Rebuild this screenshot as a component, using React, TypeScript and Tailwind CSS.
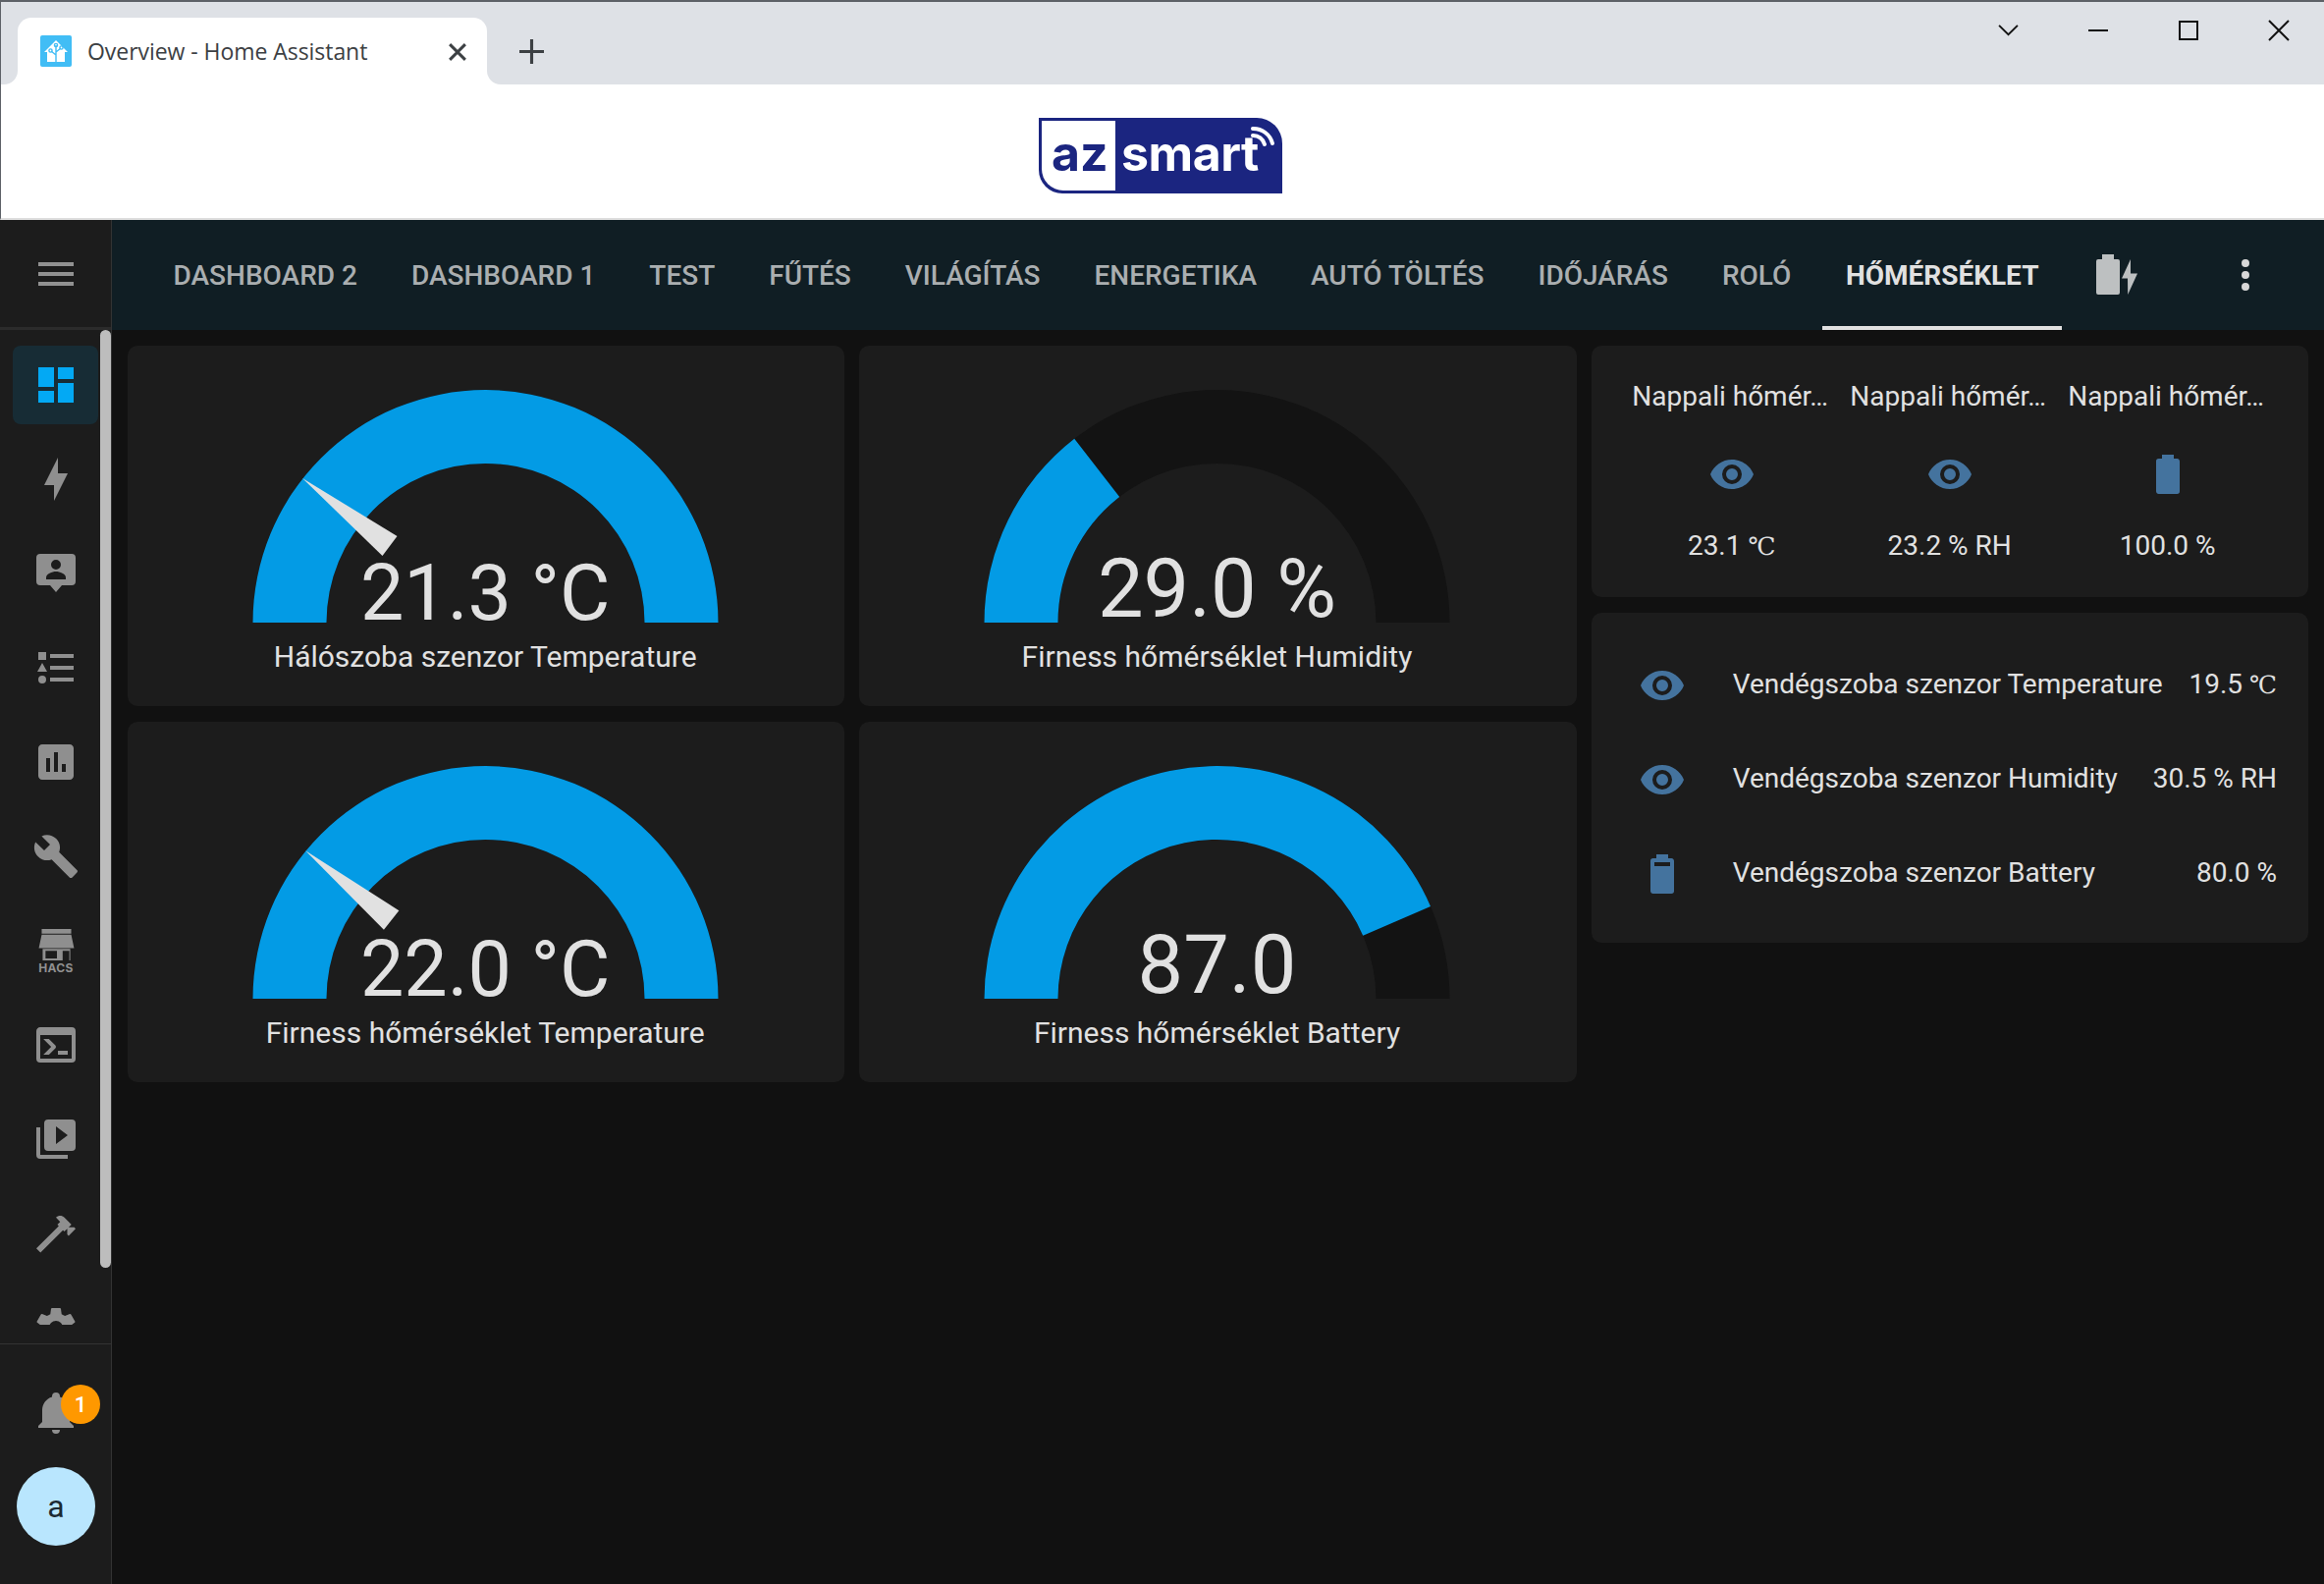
import React from 'react'

const P = {
  dashboard: 'M13,3V9H21V3M13,21H21V11H13M3,21H11V15H3M3,13H11V3H3V13Z',
  bolt: 'M11 15H6L13 1V9H18L11 23V15Z',
  person: 'M4,2H20A2,2 0 0,1 22,4V16A2,2 0 0,1 20,18H15L12,21.5L9,18H4A2,2 0 0,1 2,16V4A2,2 0 0,1 4,2ZM12,5A2.5,2.5 0 0,0 9.5,7.5A2.5,2.5 0 0,0 12,10A2.5,2.5 0 0,0 14.5,7.5A2.5,2.5 0 0,0 12,5ZM7,15H17V14C17,12.2 14,11 12,11C10,11 7,12.2 7,14V15Z',
  list: 'M5,9.5L7.5,14H2.5L5,9.5M3,4H7V8H3V4M5,20A2,2 0 0,0 7,18A2,2 0 0,0 5,16A2,2 0 0,0 3,18A2,2 0 0,0 5,20M9,5V7H21V5H9M9,19H21V17H9V19M9,13H21V11H9V13Z',
  chart: 'M19 3H5C3.9 3 3 3.9 3 5V19C3 20.1 3.9 21 5 21H19C20.1 21 21 20.1 21 19V5C21 3.9 20.1 3 19 3ZM9 17H7V10H9V17M13 17H11V7H13V17M17 17H15V13H17V17Z',
  wrench: 'M22.7,19L13.6,9.9C14.5,7.6 14,4.9 12.1,3C10.1,1 7.1,0.6 4.7,1.7L9,6L6,9L1.6,4.7C0.4,7.1 0.9,10.1 2.9,12.1C4.8,14 7.5,14.5 9.8,13.6L18.9,22.7C19.3,23.1 19.9,23.1 20.3,22.7L22.6,20.4C23.1,20 23.1,19.3 22.7,19Z',
  console: 'M20,19V7H4V19H20M20,3A2,2 0 0,1 22,5V19A2,2 0 0,1 20,21H4A2,2 0 0,1 2,19V5C2,3.89 2.9,3 4,3H20M13,17V15H18V17H13M9.58,13L5.57,9H8.4L11.7,12.3C12.09,12.69 12.09,13.33 11.7,13.72L8.42,17H5.59L9.58,13Z',
  media: 'M4,6H2V20A2,2 0 0,0 4,22H18V20H4V6ZM8,2H20A2,2 0 0,1 22,4V16A2,2 0 0,1 20,18H8A2,2 0 0,1 6,16V4A2,2 0 0,1 8,2ZM12,5.5V14.5L18,10L12,5.5Z',
  hammer: 'M2 19.63L13.43 8.2L12.72 7.5L14.14 6.07L12 3.89C13.2 2.7 15.09 2.7 16.27 3.89L19.87 7.5L18.45 8.91H21.29L22 9.62L18.45 13.21L17.74 12.5V9.62L16.27 11.04L15.56 10.33L4.13 21.76L2 19.63Z',
  cog: 'M12,15.5A3.5,3.5 0 0,1 8.5,12A3.5,3.5 0 0,1 12,8.5A3.5,3.5 0 0,1 15.5,12A3.5,3.5 0 0,1 12,15.5M19.43,12.97C19.47,12.65 19.5,12.33 19.5,12C19.5,11.67 19.47,11.34 19.43,11L21.54,9.37C21.73,9.22 21.78,8.95 21.66,8.73L19.66,5.27C19.54,5.05 19.27,4.96 19.05,5.05L16.56,6.05C16.04,5.66 15.5,5.32 14.87,5.07L14.5,2.42C14.46,2.18 14.25,2 14,2H10C9.75,2 9.54,2.18 9.5,2.42L9.13,5.07C8.5,5.32 7.96,5.66 7.44,6.05L4.95,5.05C4.73,4.96 4.46,5.05 4.34,5.27L2.34,8.73C2.21,8.95 2.27,9.22 2.46,9.37L4.57,11C4.53,11.34 4.5,11.67 4.5,12C4.5,12.33 4.53,12.65 4.57,12.97L2.46,14.63C2.27,14.78 2.21,15.05 2.34,15.27L4.34,18.73C4.46,18.95 4.73,19.03 4.95,18.95L7.44,17.94C7.96,18.34 8.5,18.68 9.13,18.93L9.5,21.58C9.54,21.82 9.75,22 10,22H14C14.25,22 14.46,21.82 14.5,21.58L14.87,18.93C15.5,18.67 16.04,18.34 16.56,17.94L19.05,18.95C19.27,19.03 19.54,18.95 19.66,18.73L21.66,15.27C21.78,15.05 21.73,14.78 21.54,14.63L19.43,12.97Z',
  bell: 'M21,19V20H3V19L5,17V11C5,7.9 7.03,5.17 10,4.29C10,4.19 10,4.1 10,4A2,2 0 0,1 12,2A2,2 0 0,1 14,4C14,4.1 14,4.19 14,4.29C16.97,5.17 19,7.9 19,11V17L21,19M14,21A2,2 0 0,1 12,23A2,2 0 0,1 10,21',
  menu: 'M3,6H21V8H3V6M3,11H21V13H3V11M3,16H21V18H3V16Z',
  dots: 'M12,16A2,2 0 0,1 14,18A2,2 0 0,1 12,20A2,2 0 0,1 10,18A2,2 0 0,1 12,16M12,10A2,2 0 0,1 14,12A2,2 0 0,1 12,14A2,2 0 0,1 10,12A2,2 0 0,1 12,10M12,4A2,2 0 0,1 14,6A2,2 0 0,1 12,8A2,2 0 0,1 10,6A2,2 0 0,1 12,4Z',
  eye: 'M12,9A3,3 0 0,0 9,12A3,3 0 0,0 12,15A3,3 0 0,0 15,12A3,3 0 0,0 12,9M12,17A5,5 0 0,1 7,12A5,5 0 0,1 12,7A5,5 0 0,1 17,12A5,5 0 0,1 12,17M12,4.5C7,4.5 2.73,7.61 1,12C2.73,16.39 7,19.5 12,19.5C17,19.5 21.27,16.39 23,12C21.27,7.61 17,4.5 12,4.5Z',
  battery: 'M16.67,4H15V2H9V4H7.33A1.33,1.33 0 0,0 6,5.33V20.67C6,21.4 6.6,22 7.33,22H16.67A1.33,1.33 0 0,0 18,20.67V5.33C18,4.6 17.4,4 16.67,4Z',
  battery80: 'M16.67,4H15V2H9V4H7.33A1.33,1.33 0 0,0 6,5.33V20.67C6,21.4 6.6,22 7.33,22H16.67A1.33,1.33 0 0,0 18,20.67V5.33C18,4.6 17.4,4 16.67,4ZM16,6V8H8V6H16Z',
}

function Mdi({ d, className }: { d: string; className: string }) {
  return (
    <svg viewBox="0 0 24 24" className={`w-[48px] h-[48px] shrink-0 ${className}`} fill="currentColor" fillRule="evenodd">
      <path d={d} />
    </svg>
  )
}

function HacsIcon() {
  return (
    <div className="flex flex-col items-center w-[48px] h-[48px] pt-[2px] text-[#8f8f8f]">
      <svg viewBox="0 0 37 33" className="w-[37px] h-[33px]" fill="currentColor" fillRule="evenodd">
        <path d="M3,0H34V5H3ZM3,6H34L37,20H0ZM4,21H33V33H4ZM7,23V31H19V23ZM25,23V33H32V23Z" />
      </svg>
      <span className="mt-[2px] text-[12px] leading-[12px] font-bold tracking-[0.3px] [font-family:Inter,sans-serif]">HACS</span>
    </div>
  )
}

const tabs = ['DASHBOARD 2', 'DASHBOARD 1', 'TEST', 'FŰTÉS', 'VILÁGÍTÁS', 'ENERGETIKA', 'AUTÓ TÖLTÉS', 'IDŐJÁRÁS', 'ROLÓ']

const CX = 237.5
const CY = 237
const RO = 237
const RI = 162

function arc(from: number, to: number) {
  const pt = (r: number, a: number) => {
    const t = (a * Math.PI) / 180
    return `${(CX - r * Math.cos(t)).toFixed(2)} ${(CY - r * Math.sin(t)).toFixed(2)}`
  }
  const large = to - from > 180 ? 1 : 0
  return `M${pt(RO, from)} A${RO} ${RO} 0 ${large} 1 ${pt(RO, to)} L${pt(RI, to)} A${RI} ${RI} 0 ${large} 0 ${pt(RI, from)} Z`
}

function Gauge({ value, label, pct, needle }: { value: string; label: string; pct: number; needle?: number }) {
  return (
    <div className="bg-[#1c1c1c] rounded-[10px] h-[367px] pt-[45px] pr-[2px] flex flex-col items-center text-[#e1e1e1]">
      <div className="relative w-[475px] h-[237px]">
        <svg viewBox="0 0 475 237" className="w-[475px] h-[237px] block">
          <path d={arc(0, 180)} fill="#131313" />
          <path d={arc(0, pct * 180)} fill="#039be5" />
          {needle !== undefined && (
            <polygon points="51,90 147.5,149 132.5,169" fill="#e1e1e1" transform={`rotate(${needle} ${CX} ${CY})`} />
          )}
        </svg>
        <div className={`absolute left-0 right-0 text-center ${needle !== undefined ? 'bottom-[-10px] text-[79px] leading-[79px]' : 'bottom-[-7px] text-[83px] leading-[83px]'}`}>{value}</div>
      </div>
      <div className="mt-[17px] text-[30px] leading-[36px]">{label}</div>
    </div>
  )
}

function Celsius() {
  return <span className="[font-family:'DejaVu_Serif',serif] text-[25px]">℃</span>
}

function GlanceCol({ icon, value, celsius }: { icon: string; value: string; celsius?: boolean }) {
  return (
    <div className="flex flex-col items-center w-[222px]">
      <div className="pr-[3px] whitespace-nowrap text-center text-[28px] leading-[36px]">Nappali hőmér…</div>
      <Mdi d={icon} className="text-[#44739e] mt-[37px]" />
      <div className="mt-[31px] text-[28px] leading-[36px]">{value}{celsius && <Celsius />}</div>
    </div>
  )
}

function EntityRow({ icon, name, value, celsius }: { icon: string; name: string; value: string; celsius?: boolean }) {
  return (
    <div className="flex items-center h-[96px]">
      <Mdi d={icon} className="text-[#44739e]" />
      <div className="ml-[48px] flex-1 text-[28px] leading-[36px] mt-[-2px]">{name}</div>
      <div className="text-[28px] leading-[36px] mt-[-2px]">{value}{celsius && <Celsius />}</div>
    </div>
  )
}

const sideIcons = [P.bolt, P.person, P.list, P.chart, P.wrench]
const sideIcons2 = [P.console, P.media, P.hammer, P.cog]

export default function App() {
  return (
    <div className="w-[2367px] h-[1613px] overflow-hidden flex flex-col bg-[#111111] [font-family:Roboto,sans-serif]">
      <div className="h-[2px] bg-[#5d6167] shrink-0" />

      {/* browser tab strip */}
      <div className="h-[84px] shrink-0 bg-[#dee1e6] flex items-start border-l border-[#5d6167]">
        <div className="relative mt-[16px] ml-[17px] w-[478px] h-[68px] bg-white rounded-t-[14px] flex items-start pt-[18px] pl-[23px]">
          <div className="absolute left-[-14px] bottom-0 w-[14px] h-[14px] bg-white">
            <div className="w-full h-full bg-[#dee1e6] rounded-br-[14px]" />
          </div>
          <div className="absolute right-[-14px] bottom-0 w-[14px] h-[14px] bg-white">
            <div className="w-full h-full bg-[#dee1e6] rounded-bl-[14px]" />
          </div>
          <svg viewBox="0 0 32 32" className="w-[32px] h-[32px] shrink-0">
            <rect width="32" height="32" rx="2" fill="#41bdf5" />
            <path d="M16,5L28,17H25V27H7V17H4Z" fill="#fff" />
            <g stroke="#41bdf5" strokeWidth="1.4" fill="none">
              <path d="M16,27V10M16,20L11,16M16,17L21,13" />
              <circle cx="16" cy="10" r="1.6" />
              <circle cx="10.5" cy="15.5" r="1.6" />
              <circle cx="21.5" cy="12.5" r="1.6" />
            </g>
          </svg>
          <span className="ml-[16px] text-[23px] leading-[32px] tracking-[-0.05px] text-[#3c4043] [font-family:'Open_Sans',sans-serif] whitespace-nowrap">Overview - Home Assistant</span>
          <svg viewBox="0 0 16 16" className="absolute left-[439px] top-[26px] w-[18px] h-[18px]" stroke="#3c4043" strokeWidth="2.6">
            <path d="M1,1L15,15M15,1L1,15" />
          </svg>
        </div>
        <svg viewBox="0 0 24 24" className="ml-[33px] mt-[38px] w-[25px] h-[25px]" stroke="#3c4043" strokeWidth="3">
          <path d="M12,0V24M0,12H24" />
        </svg>
        <div className="ml-auto flex">
          <div className="w-[92px] h-[58px] flex items-center justify-center">
            <svg viewBox="0 0 24 14" className="w-[21px] h-[12px]" stroke="#111" strokeWidth="2.2" fill="none"><path d="M1,1L12,12L23,1" /></svg>
          </div>
          <div className="w-[92px] h-[58px] flex items-center justify-center">
            <div className="w-[20px] h-[2px] bg-[#111]" />
          </div>
          <div className="w-[92px] h-[58px] flex items-center justify-center">
            <div className="w-[20px] h-[20px] border-2 border-[#111]" />
          </div>
          <div className="w-[92px] h-[58px] flex items-center justify-center">
            <svg viewBox="0 0 22 22" className="w-[22px] h-[22px]" stroke="#111" strokeWidth="2"><path d="M1,1L21,21M21,1L1,21" /></svg>
          </div>
        </div>
      </div>

      {/* logo bar */}
      <div className="h-[138px] shrink-0 bg-white border-b-2 border-[#dddddd] border-l border-l-[#5d6167] flex items-start justify-center pt-[34px] pr-[4px]">
        <div className="relative flex w-[248px] h-[77px] bg-[#1b2580] rounded-tr-[26px] rounded-bl-[24px] p-[3px] [font-family:Inter,sans-serif] font-bold text-[50px] leading-[66px]">
          <div className="w-[75px] bg-white rounded-bl-[22px] text-[#1b2580] pl-[10px]">az</div>
          <div className="text-white pl-[6px] tracking-[-0.5px]">smart</div>
          <svg viewBox="0 0 30 30" className="absolute left-[212px] top-[6px] w-[30px] h-[30px]" stroke="#fff" strokeWidth="4" strokeLinecap="round" fill="none">
            <path d="M6,5A20,20 0 0,1 26,20M6,12A12,12 0 0,1 18,21" />
          </svg>
        </div>
      </div>

      <div className="flex-1 flex min-h-0">
        {/* sidebar */}
        <div className="relative w-[114px] shrink-0 bg-[#1c1c1c] border-r border-[#333333] flex flex-col">
          <div className="h-[112px] shrink-0 flex items-center pl-[33px] border-b-[3px] border-[#2b2b2b]">
            <Mdi d={P.menu} className="text-[#919191]" />
          </div>
          <div className="h-[1013px] shrink-0 overflow-hidden pt-[8px]">
            <div className="h-[96px] flex items-center">
              <div className="ml-[13px] w-[87px] h-[80px] rounded-[8px] bg-[#172c35] flex items-center justify-center">
                <Mdi d={P.dashboard} className="text-[#03a9f4]" />
              </div>
            </div>
            {sideIcons.map((d) => (
              <div key={d} className="h-[96px] flex items-center pl-[33px]">
                <Mdi d={d} className="text-[#8f8f8f]" />
              </div>
            ))}
            <div className="h-[96px] flex items-center pl-[33px]">
              <HacsIcon />
            </div>
            {sideIcons2.map((d) => (
              <div key={d} className="h-[96px] flex items-center pl-[33px]">
                <Mdi d={d} className="text-[#8f8f8f]" />
              </div>
            ))}
          </div>
          <div className="mt-[19px] border-t border-[#333333] pt-[45px] pl-[17px]">
            <div className="relative ml-[16px] w-[48px] h-[48px]">
              <Mdi d={P.bell} className="text-[#8f8f8f]" />
              <div className="absolute left-[29px] top-[-4px] w-[40px] h-[40px] rounded-full bg-[#ff9800] text-white text-[22px] font-medium flex items-center justify-center">1</div>
            </div>
            <div className="mt-[32px] w-[80px] h-[80px] rounded-full bg-[#b9e6fe] text-[#1c2a33] text-[32px] flex items-center justify-center">a</div>
          </div>
          {/* overlay scrollbar */}
          <div className="absolute left-[102px] top-[112px] w-[11px] h-[955px] rounded-full bg-[#bdbdbd]" />
        </div>

        <div className="flex-1 min-w-0 flex flex-col">
          {/* header tabs */}
          <div className="h-[112px] shrink-0 bg-[#101e24] flex items-start pl-[35px] pr-[56px]">
            {tabs.map((t) => (
              <div key={t} className="h-[112px] px-[27.5px] pt-[2px] flex items-center text-[28px] font-medium text-[#aaaeb0] whitespace-nowrap">{t}</div>
            ))}
            <div className="ml-[4px] h-[112px] px-[24px] pt-[6px] flex items-center text-[28px] font-bold text-[#e1e1e1] whitespace-nowrap border-b-4 border-[#e1e1e1]">HŐMÉRSÉKLET</div>
            <svg viewBox="0 0 24 24" className="ml-[32px] mt-[32px] w-[48px] h-[48px]" fill="#bdc0c1">
              <path d="M4.5,1.5H10.5V4H12.5A1,1 0 0,1 13.5,5V21A1,1 0 0,1 12.5,22H2.5A1,1 0 0,1 1.5,21V5A1,1 0 0,1 2.5,4H4.5Z" />
              <path d="M19,4L14.5,13.7H17.5L17.6,22L22.5,11.2H19Z" />
            </svg>
            <div className="ml-auto mt-[32px]">
              <Mdi d={P.dots} className="text-[#d8d8d8]" />
            </div>
          </div>

          {/* dashboard cards */}
          <div className="grid grid-cols-3 gap-x-[15px] pt-[16px] px-[16px] items-start text-[#e1e1e1]">
            <div className="col-span-2 grid grid-cols-2 gap-x-[15px] gap-y-[16px]">
              <Gauge value="21.3 °C" label="Hálószoba szenzor Temperature" pct={1} needle={0} />
              <Gauge value="29.0 %" label="Firness hőmérséklet Humidity" pct={0.29} />
              <Gauge value="22.0 °C" label="Firness hőmérséklet Temperature" pct={1} needle={1.2} />
              <Gauge value="87.0" label="Firness hőmérséklet Battery" pct={0.87} />
            </div>
            <div className="flex flex-col gap-[16px]">
              <div className="h-[256px] bg-[#1c1c1c] rounded-[10px] px-[32px] pt-[34px] flex">
                <GlanceCol icon={P.eye} value="23.1 " celsius />
                <GlanceCol icon={P.eye} value="23.2 % RH" />
                <GlanceCol icon={P.battery} value="100.0 %" />
              </div>
              <div className="h-[336px] bg-[#1c1c1c] rounded-[10px] pl-[48px] pr-[32px] pt-[26px]">
                <EntityRow icon={P.eye} name="Vendégszoba szenzor Temperature" value="19.5 " celsius />
                <EntityRow icon={P.eye} name="Vendégszoba szenzor Humidity" value="30.5 % RH" />
                <EntityRow icon={P.battery80} name="Vendégszoba szenzor Battery" value="80.0 %" />
              </div>
            </div>
          </div>
        </div>
      </div>
    </div>
  )
}
